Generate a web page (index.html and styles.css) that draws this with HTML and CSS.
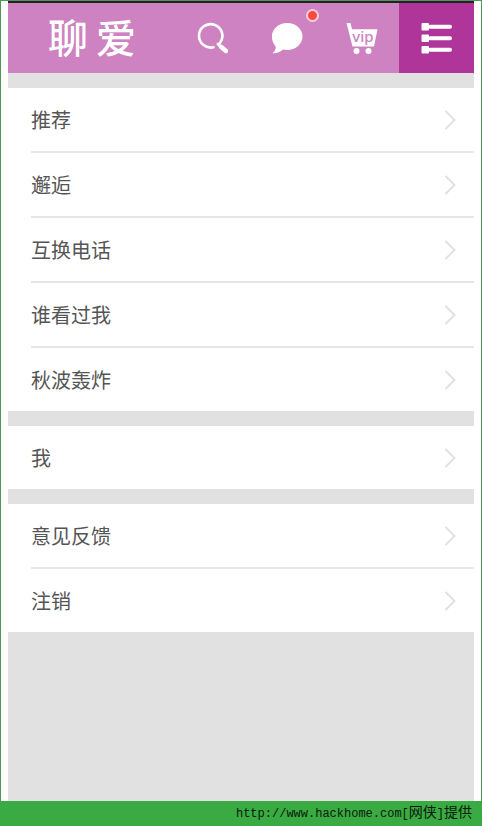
FILE: index.html
```html
<!DOCTYPE html>
<html lang="zh-CN">
<head>
<meta charset="utf-8">
<meta name="viewport" content="width=device-width, initial-scale=1">
<title>聊爱</title>
<link rel="stylesheet" href="styles.css">
</head>
<body>
<div class="frame">
  <div class="app">
    <header class="topbar">
      <h1 class="logo"><span>聊</span><span>爱</span></h1>
      <nav class="tabs">
        <button class="tab" type="button" aria-label="搜索">
          <svg class="icon" viewBox="0 0 32 32" aria-hidden="true">
            <path d="M17.500 25.200A11.700 11.700 0 1 1 23.800 21.200" fill="none" stroke="#fff" stroke-width="2.600" stroke-linecap="round"/>
            <path d="M22 22l2.500 2.500" stroke="#fff" stroke-width="3" stroke-linecap="round"/>
            <path d="M25 24.800l5 4.200" stroke="#fff" stroke-width="4.400" stroke-linecap="round"/>
          </svg>
        </button>
        <button class="tab" type="button" aria-label="消息">
          <svg class="icon" viewBox="0 0 32 32" aria-hidden="true">
            <path d="M16.200 1C24.800 1 31.500 7 31.500 14.400S24.800 28 16.200 28c-1.500 0-2.800-.2-4.200-.5C9.500 30 5.500 31.600 1.500 31.200c2.300-1.900 3.300-4.200 3.200-6.800C2.200 22 .9 18.400.9 14.600.9 7 7.600 1 16.200 1z" fill="#fff"/>
          </svg>
          <span class="badge"></span>
        </button>
        <button class="tab" type="button" aria-label="VIP">
          <svg class="icon" viewBox="0 0 32 32" aria-hidden="true">
            <path d="M.5 1h4L6 7.200h25.500L28 24.500H6.500z" fill="#fff"/>
            <circle cx="10.500" cy="29" r="3" fill="#fff"/>
            <circle cx="22.500" cy="29" r="3" fill="#fff"/>
            <text class="vip" x="17" y="20" text-anchor="middle">vip</text>
          </svg>
        </button>
        <button class="tab tab-active" type="button" aria-label="菜单">
          <svg class="icon" viewBox="0 0 32 32" aria-hidden="true">
            <g fill="#fff">
              <rect x="0.500" y="1" width="7.500" height="7.500" rx="1"/>
              <rect x="0.500" y="12.500" width="7.500" height="7.500" rx="1"/>
              <rect x="0.500" y="24" width="7.500" height="7.500" rx="1"/>
              <rect x="7" y="2.800" width="24" height="4" rx="2"/>
              <rect x="7" y="14.300" width="24" height="4" rx="2"/>
              <rect x="7" y="25.800" width="24" height="4" rx="2"/>
            </g>
          </svg>
        </button>
      </nav>
    </header>
    <main class="menu">
      <ul class="group">
        <li><a class="row" href="#"><span>推荐</span><svg class="chevron" viewBox="0 0 12 20" aria-hidden="true"><path d="M1.500 1L10.500 10L1.500 19"/></svg></a></li>
        <li><a class="row" href="#"><span>邂逅</span><svg class="chevron" viewBox="0 0 12 20" aria-hidden="true"><path d="M1.500 1L10.500 10L1.500 19"/></svg></a></li>
        <li><a class="row" href="#"><span>互换电话</span><svg class="chevron" viewBox="0 0 12 20" aria-hidden="true"><path d="M1.500 1L10.500 10L1.500 19"/></svg></a></li>
        <li><a class="row" href="#"><span>谁看过我</span><svg class="chevron" viewBox="0 0 12 20" aria-hidden="true"><path d="M1.500 1L10.500 10L1.500 19"/></svg></a></li>
        <li><a class="row" href="#"><span>秋波轰炸</span><svg class="chevron" viewBox="0 0 12 20" aria-hidden="true"><path d="M1.500 1L10.500 10L1.500 19"/></svg></a></li>
      </ul>
      <ul class="group">
        <li><a class="row" href="#"><span>我</span><svg class="chevron" viewBox="0 0 12 20" aria-hidden="true"><path d="M1.500 1L10.500 10L1.500 19"/></svg></a></li>
      </ul>
      <ul class="group">
        <li><a class="row" href="#"><span>意见反馈</span><svg class="chevron" viewBox="0 0 12 20" aria-hidden="true"><path d="M1.500 1L10.500 10L1.500 19"/></svg></a></li>
        <li><a class="row" href="#"><span>注销</span><svg class="chevron" viewBox="0 0 12 20" aria-hidden="true"><path d="M1.500 1L10.500 10L1.500 19"/></svg></a></li>
      </ul>
    </main>
  </div>
</div>
<footer class="credit"><span>http://www.hackhome.com[</span><span class="cjk">网侠</span><span>]</span><span class="cjk">提供</span></footer>
</body>
</html>
```
FILE: styles.css
```css
* {
  box-sizing: border-box;
}

body {
  margin: 0;
  min-height: 100vh;
  display: flex;
  flex-direction: column;
  background: #fff;
  font-family: "Noto Sans CJK SC", sans-serif;
}

.frame {
  flex: 1;
  display: flex;
  padding: 0 7px;
  border: 1px solid #4a9a55;
  border-bottom: 0;
}

.app {
  flex: 1;
  background: #e1e1e1;
  border-top: 2px solid #2a1c28;
}

.topbar {
  display: flex;
  height: 70px;
  background: #ce82c1;
}

.logo {
  flex: 1;
  display: flex;
  align-items: center;
  gap: 8px;
  margin: 0;
  padding: 0 0 4px 40px;
  color: #fff;
  font-size: 40px;
  line-height: 40px;
  font-weight: 500;
}

.tabs {
  display: flex;
}

.tab {
  position: relative;
  display: flex;
  align-items: center;
  justify-content: center;
  width: 75px;
  padding: 0;
  border: 0;
  background: transparent;
}

.tab-active {
  background: #af359b;
}

.icon {
  width: 32px;
  height: 32px;
}

.vip {
  fill: #ce82c1;
  font: 500 15px "Noto Sans", sans-serif;
}

.badge {
  position: absolute;
  top: 6px;
  right: 5px;
  width: 13px;
  height: 13px;
  border: 2px solid #fbd0dc;
  border-radius: 50%;
  background: #f94b3c;
}

.menu {
  display: flex;
  flex-direction: column;
  gap: 15px;
  padding-top: 15px;
}

.group {
  margin: 0;
  padding: 0 0 0 23px;
  list-style: none;
  background: #fff;
}

.row {
  display: flex;
  align-items: center;
  justify-content: space-between;
  height: 63px;
  padding-right: 18px;
  color: #555;
  font-size: 20px;
  line-height: 30px;
  text-decoration: none;
}

.group li:not(:last-child) {
  border-bottom: 2px solid #e6e6e6;
}

.chevron {
  width: 12px;
  height: 20px;
  fill: none;
  stroke: #e1e1e1;
  stroke-width: 2;
}

.credit {
  display: flex;
  align-items: baseline;
  justify-content: flex-end;
  height: 25px;
  padding-right: 10px;
  background: #3aaa42;
  color: #0a1a0a;
  font-family: "Liberation Mono", monospace;
  font-size: 12px;
  line-height: 20px;
}

.cjk {
  font-family: "Noto Sans CJK SC", sans-serif;
  font-size: 14px;
}
```
